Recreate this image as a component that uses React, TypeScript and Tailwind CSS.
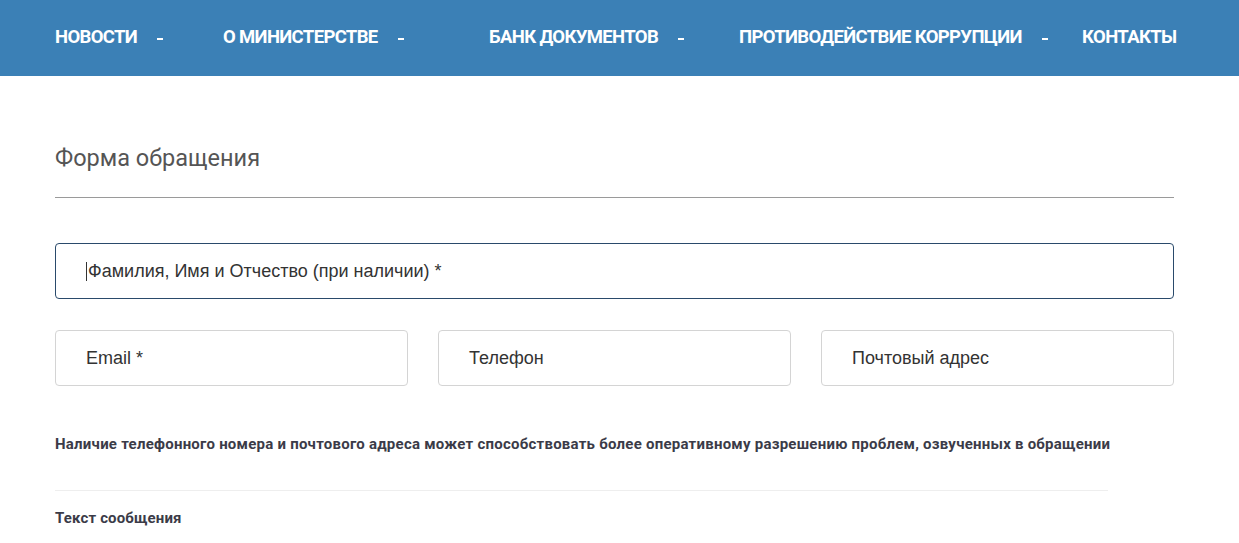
import React from 'react'

const navItems = [
  { label: 'НОВОСТИ', drop: true, w: 'w-[168px]' },
  { label: 'О МИНИСТЕРСТВЕ', drop: true, w: 'w-[266px]' },
  { label: 'БАНК ДОКУМЕНТОВ', drop: true, w: 'w-[250px]' },
  { label: 'ПРОТИВОДЕЙСТВИЕ КОРРУПЦИИ', drop: true, w: 'w-[343px]' },
  { label: 'КОНТАКТЫ', drop: false, w: '' },
]

export default function App() {
  return (
    <div className="min-h-screen bg-white font-['Roboto',sans-serif]">
      {/* Top nav */}
      <nav className="h-[76px] bg-[#3b80b6]">
        <div className="flex h-full items-center pb-[1px] pl-[55px]">
          {navItems.map((item) => (
            <div key={item.label} className={`flex items-center ${item.w}`}>
              <span className="whitespace-nowrap text-[18.5px] font-bold tracking-[-0.035em] text-white">
                {item.label}
              </span>
              {item.drop && <span className="ml-[20px] mt-[2px] inline-block h-[2px] w-[6px] bg-white" />}
            </div>
          ))}
        </div>
      </nav>

      {/* Form */}
      <main className="px-[55px] pt-[68px]">
        <div className="w-[1119px]">
          <h2 className="text-[23.5px] leading-[28px] text-[#555555]">Форма обращения</h2>
          <div className="mt-[25px] h-px bg-[#9a9a9a]" />

          <div className="mt-[45px] flex h-[56px] items-center rounded-[4px] border border-[#2a4a6b] px-[30px] font-['Liberation_Sans',Arial,sans-serif] text-[18px] text-[#333333]">
            <span className="mr-px inline-block h-[19px] w-px bg-[#333333]" />
            Фамилия, Имя и Отчество (при наличии) *
          </div>

          <div className="mt-[31px] grid grid-cols-3 gap-[30px] font-['Liberation_Sans',Arial,sans-serif] text-[18px] text-[#333333]">
            {['Email *', 'Телефон', 'Почтовый адрес'].map((p) => (
              <div key={p} className="flex h-[56px] items-center rounded-[4px] border border-[#d4d4d4] px-[30px]">
                {p}
              </div>
            ))}
          </div>

          <p className="mt-[48px] text-[15px] font-bold leading-[20px] tracking-[0.016em] text-[#3b3b48]">
            Наличие телефонного номера и почтового адреса может способствовать более оперативному разрешению проблем, озвученных в обращении
          </p>

          <div className="mt-[36px] h-px w-[1053px] bg-[#eeeeee]" />

          <p className="mt-[17px] text-[15px] font-bold leading-[20px] tracking-[0.01em] text-[#3b3b48]">Текст сообщения</p>
        </div>
      </main>
    </div>
  )
}
